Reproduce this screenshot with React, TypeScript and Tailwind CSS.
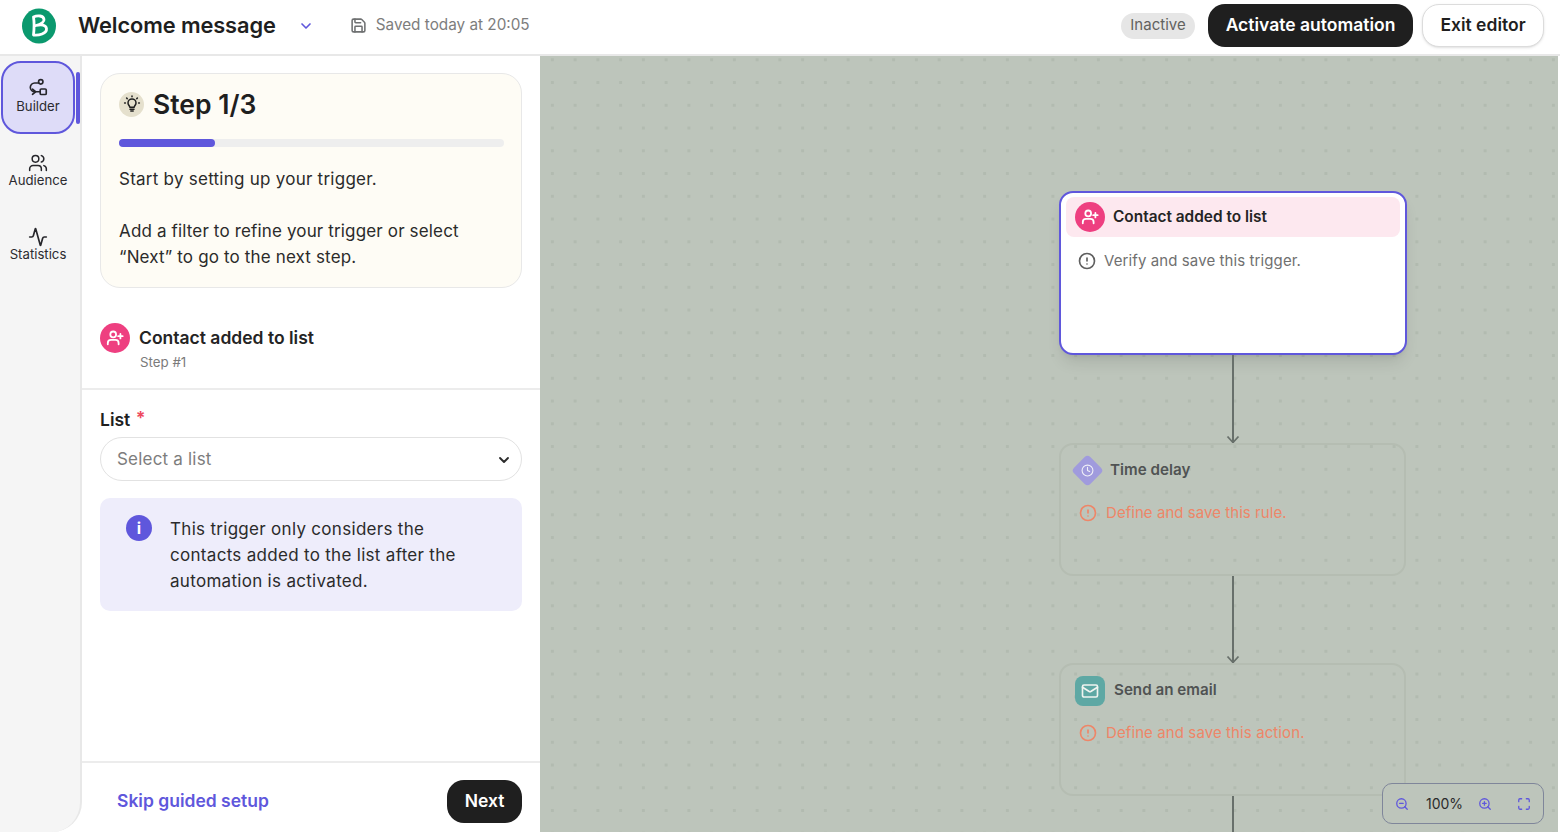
import { Activity, ChevronDown, CircleAlert, Clock, Mail, Maximize, Save, Users, ZoomIn, ZoomOut } from "lucide-react";

function ContactIcon({ size = 16 }: { size?: number }) {
  return (
    <svg width={size} height={size} viewBox="0 0 20 20" fill="none" stroke="#fff" strokeWidth="2" strokeLinecap="round" strokeLinejoin="round">
      <circle cx="8" cy="6" r="3.2" />
      <path d="M2 17v-1.5A3.5 3.5 0 0 1 5.5 12h5a3.5 3.5 0 0 1 3.500 3.500V17" />
      <path d="M16 5.500v5M13.500 8h5" />
    </svg>
  );
}

function BuilderIcon() {
  return (
    <svg width="22" height="22" viewBox="0 0 20 20" fill="none" stroke="#26262b" strokeWidth="1.500" strokeLinecap="round" strokeLinejoin="round">
      <circle cx="12.500" cy="3.500" r="2" />
      <path d="M10.500 4.500H7a4 4 0 0 0-4 4v0a4 4 0 0 0 4 4h5" />
      <path d="M5 14.800l2.800-2.300L5 10.200" />
      <rect x="12" y="10" width="5.500" height="5" rx="1" />
    </svg>
  );
}

function BulbIcon() {
  return (
    <svg width="18" height="18" viewBox="0 0 18 18" fill="none" stroke="#1f1f1f" strokeWidth="1.500" strokeLinecap="round" strokeLinejoin="round">
      <path d="M6.800 12.300c0-1.500-1.800-2.200-1.800-4.400a4 4 0 0 1 8 0c0 2.200-1.800 2.900-1.800 4.400z" />
      <path d="M7 14.200h4M7.800 16h2.400" />
      <path d="M9 1v.8M3.600 3l.6.6M14.400 3l-.6.6M1.600 8h.8M15.600 8h.8" />
    </svg>
  );
}

function NavItem({ label, icon, active, className = "" }: { label: string; icon: React.ReactNode; active?: boolean; className?: string }) {
  return (
    <div className={active ? "relative ml-[1px] flex h-[73px] w-[74px] flex-col items-center justify-center rounded-[20px] border-2 border-[#5f57dc] bg-[#dedcf8] pb-[1px]" : `flex h-[54px] w-[76px] flex-col items-center justify-center ${className}`}>
      <span className="flex h-[19px] items-center">{icon}</span>
      <span className="text-[13.200px] leading-[17px] text-[#2b2b30]">{label}</span>
      {active && <span className="absolute right-[-7px] top-[9px] h-[52px] w-[4px] rounded-full bg-[#5f57dc]" />}
    </div>
  );
}

function Arrow({ top, height, head = true }: { top: string; height: string; head?: boolean }) {
  return (
    <div className={`absolute left-[692px] w-[2px] bg-[#68706b] ${top} ${height}`}>
      {head && (
        <svg className="absolute bottom-[-1px] left-[-6px]" width="14" height="10" viewBox="0 0 14 10" fill="none" stroke="#68706b" strokeWidth="1.800">
          <path d="M1.500 2.500L7 8.500l5.500-6" />
        </svg>
      )}
    </div>
  );
}

function DimCard({ top, icon, title, titleGap, message, tracking }: { top: string; icon: React.ReactNode; title: string; titleGap: string; message: string; tracking: string }) {
  return (
    <div className={`absolute left-[519px] h-[133px] w-[347px] rounded-[14px] border-2 border-[#b5bdb2] ${top}`}>
      <div className={`flex h-[48px] items-center pt-[3px] ${titleGap}`}>
        {icon}
        <span className="text-[15.200px] font-semibold text-[#505353]">{title}</span>
      </div>
      <div className="mt-[-2px] flex h-[44px] items-center gap-[9px] pl-[18px]">
        <CircleAlert size={18} strokeWidth={2.200} color="#ee8668" />
        <span className={`text-[15px] text-[#ee8668] ${tracking}`}>{message}</span>
      </div>
    </div>
  );
}

export default function App() {
  return (
    <div className="flex h-[832px] w-[1560px] flex-col overflow-hidden bg-white font-['Inter',sans-serif] text-[#1f1f1f]">
      <header className="flex h-[56px] shrink-0 items-center border-b-2 border-[#e8e8e8] pb-[3px] pr-[16px]">
        <svg className="ml-[21px]" width="36" height="36" viewBox="0 0 35 36">
          <ellipse cx="17.500" cy="18" rx="17" ry="17.500" fill="#0b996e" />
          <path d="M12 27C12.800 20 12.800 14 12 9c4-2 10-1.500 10.500 2.500.3 3-3 4.500-8 6 5-1.200 10-1 10.500 3.200.5 5-8 7-13 6.300z" fill="none" stroke="#fff" strokeWidth="2.800" strokeLinejoin="round" />
        </svg>
        <span className="ml-[21px] text-[21.800px] font-semibold tracking-[-0.1px]">Welcome message</span>
        <ChevronDown className="ml-[22px]" size={16} strokeWidth={2.500} color="#5f57dc" />
        <Save className="ml-[36px]" size={17} strokeWidth={2.200} color="#6f7172" />
        <span className="ml-[9px] text-[15.300px] text-[#7d7d7d]">Saved today at 20:05</span>
        <span className="ml-auto flex h-[26px] w-[74px] items-center justify-center rounded-full bg-[#e6e6e6] text-[15px] text-[#62625f]">Inactive</span>
        <button className="ml-[13px] flex h-[43px] w-[205px] items-center justify-center rounded-[17px] bg-[#1f1f1f] text-[17.500px] font-semibold text-white">Activate automation</button>
        <button className="ml-[9px] flex h-[43px] w-[122px] items-center justify-center rounded-[17px] border border-[#dcdcdc] bg-white text-[17.500px] font-semibold shadow-sm">Exit editor</button>
      </header>
      <div className="flex min-h-0 flex-1">
        <aside className="flex w-[82px] shrink-0 flex-col items-start rounded-br-[30px] border-r-2 border-[#e8e8e8] bg-[#f5f5f5] pt-[5px]">
          <NavItem active label="Builder" icon={<BuilderIcon />} />
          <NavItem className="mt-[10px]" label="Audience" icon={<Users size={20} strokeWidth={1.800} color="#26262b" />} />
          <NavItem className="mt-[20px]" label="Statistics" icon={<Activity size={20} strokeWidth={2} color="#26262b" />} />
        </aside>
        <main className="flex w-[458px] shrink-0 flex-col">
          <div className="mx-[18px] mt-[17px] h-[215px] rounded-[20px] border border-[#e8e8e8] bg-[#fefcf5] px-[18px] pt-[13px]">
            <div className="flex items-center gap-[9px]">
              <span className="flex h-[25px] w-[25px] items-center justify-center rounded-full bg-[#e5e0cd]">
                <BulbIcon />
              </span>
              <span className="text-[26.500px] font-semibold leading-[34px]">Step 1/3</span>
            </div>
            <div className="mt-[18px] h-[8px] w-[385px] rounded-full bg-[#eeeeee]">
              <div className="h-[8px] w-[96px] rounded-full bg-[#5f57dc]" />
            </div>
            <p className="mt-[19px] text-[17px] leading-[26px] tracking-[0.25px] text-[#2b2b2b]">Start by setting up your trigger.</p>
            <p className="mt-[26px] text-[17px] leading-[26px] tracking-[0.15px] text-[#2b2b2b]">Add a filter to refine your trigger or select<br />“Next” to go to the next step.</p>
          </div>
          <div className="flex h-[102px] flex-col border-b-2 border-[#ececec] px-[18px] pt-[35px]">
            <div className="flex items-center gap-[9px]">
              <span className="flex h-[30px] w-[30px] items-center justify-center rounded-full bg-[#ee3f80]"><ContactIcon size={18} /></span>
              <span className="text-[17.500px] font-semibold text-[#242424]">Contact added to list</span>
            </div>
            <span className="ml-[40px] text-[13.300px] leading-[18px] text-[#7b7b7b]">Step #1</span>
          </div>
          <div className="px-[18px] pt-[18px]">
            <div className="text-[17.500px] font-semibold leading-[24px]">List <span className="relative top-[-2px] ml-[1px] font-bold text-[#ee4a60]">*</span></div>
            <div className="mt-[5px] flex h-[44px] items-center justify-between rounded-full border border-[#e2e2e2] pl-[16px] pr-[9px] pt-[2px]">
              <span className="text-[17px] tracking-[0.2px] text-[#7d7d7d]">Select a list</span>
              <ChevronDown size={16} strokeWidth={2.800} color="#2b2b2b" />
            </div>
            <div className="mt-[17px] flex h-[113px] gap-[18px] rounded-[10px] bg-[#eeedfb] pl-[26px] pt-[17px]">
              <span className="flex h-[26px] w-[26px] shrink-0 items-center justify-center rounded-full bg-[#5f57dc] text-[16px] font-bold leading-none text-white">i</span>
              <p className="pt-[1px] text-[17px] leading-[26px] tracking-[0.3px] text-[#2b2b2b]">This trigger only considers the<br />contacts added to the list after the<br />automation is activated.</p>
            </div>
          </div>
          <div className="mt-auto flex h-[71px] items-center justify-between border-t-2 border-[#ececec] pl-[35px] pr-[18px] pt-[7px]">
            <span className="text-[17.500px] font-semibold text-[#5f57dc]">Skip guided setup</span>
            <button className="flex h-[43px] w-[75px] items-center justify-center rounded-[17px] bg-[#1f1f1f] text-[17.500px] font-semibold text-white">Next</button>
          </div>
        </main>
        <section className="relative w-[1018px] shrink-0 overflow-hidden bg-[#bdc5bb] bg-[radial-gradient(circle,#b2bbb0_1.500px,transparent_2px)] bg-[length:22.750px_22.750px] bg-[position:1px_-7.600px]">
          <div className="absolute left-[519px] top-[135px] h-[164px] w-[348px] rounded-[14px] border-2 border-[#5f57dc] bg-white px-[5px] py-[4px] shadow-lg">
            <div className="flex h-[40px] items-center gap-[8px] rounded-[8px] bg-[#fde8ef] pl-[9px]">
              <span className="flex h-[30px] w-[30px] items-center justify-center rounded-full bg-[#ee3f80]"><ContactIcon size={18} /></span>
              <span className="text-[15.400px] font-semibold text-[#242424]">Contact added to list</span>
            </div>
            <div className="mt-[13px] flex items-center gap-[8px] pl-[12px]">
              <CircleAlert size={18} strokeWidth={2.200} color="#5f5f5f" />
              <span className="text-[15px] tracking-[0.1px] text-[#707070]">Verify and save this trigger.</span>
            </div>
          </div>
          <Arrow top="top-[299px]" height="h-[88px]" />
          <DimCard
            top="top-[387px]"
            title="Time delay"
            titleGap="gap-[11px] pl-[15px]"
            message="Define and save this rule."
            tracking="tracking-[0.05px]"
            icon={
              <span className="flex h-[23px] w-[23px] rotate-45 items-center justify-center rounded-[4px] bg-[#a09bdd]">
                <Clock className="-rotate-45" size={13} strokeWidth={2} color="#f0f0f8" />
              </span>
            }
          />
          <Arrow top="top-[520px]" height="h-[87px]" />
          <DimCard
            top="top-[607px]"
            title="Send an email"
            titleGap="gap-[9px] pl-[14px]"
            message="Define and save this action."
            tracking="tracking-[0.1px]"
            icon={
              <span className="flex h-[30px] w-[30px] items-center justify-center rounded-[8px] bg-[#5ea8a4]">
                <Mail size={18} strokeWidth={2.200} color="#f0f4f0" />
              </span>
            }
          />
          <Arrow top="top-[740px]" height="h-[40px]" head={false} />
          <div className="absolute left-[842px] top-[727px] flex h-[41px] w-[162px] items-center rounded-[10px] border border-[#7f869a] bg-[#bdc5bb] pl-[12px]">
            <ZoomOut size={14} strokeWidth={2.200} color="#5f57dc" />
            <span className="ml-[17px] w-[38px] text-[14px] text-[#2b2b2b]">100%</span>
            <ZoomIn className="ml-[14px]" size={14} strokeWidth={2.200} color="#5f57dc" />
            <Maximize className="ml-[25px]" size={14} strokeWidth={2.200} color="#5f57dc" />
          </div>
        </section>
      </div>
    </div>
  );
}
